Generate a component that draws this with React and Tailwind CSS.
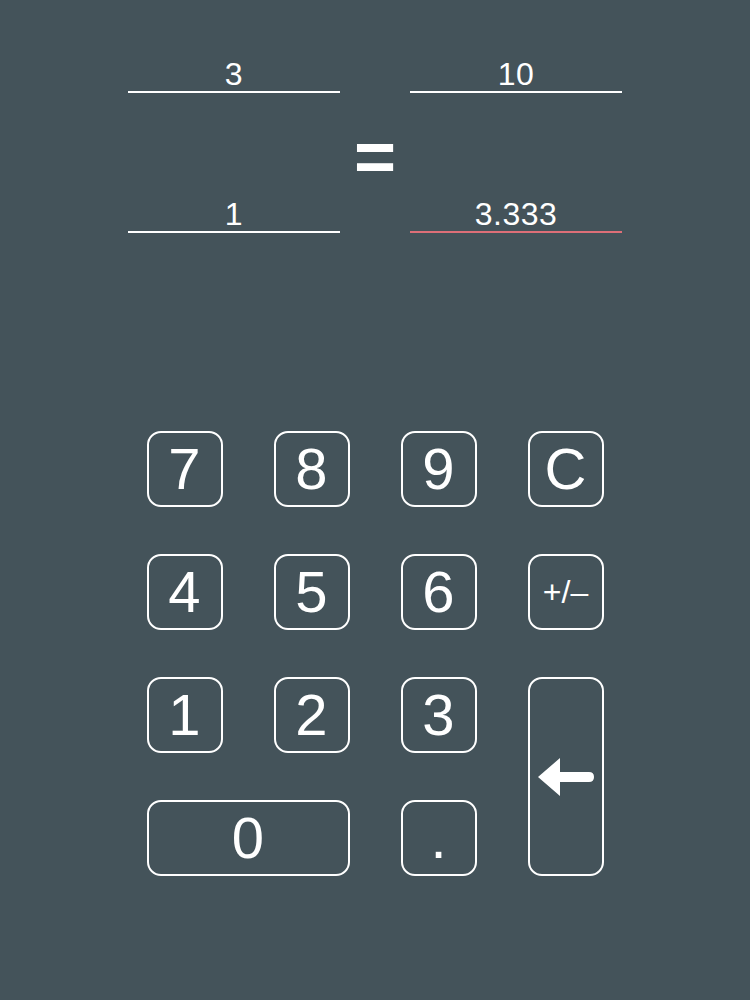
const font = { fontFamily: '"Liberation Sans", Arial, sans-serif' };

function Field({ value, accent }) {
  return (
    <div
      className={`w-[212px] h-[36px] text-center text-[32px] leading-[34px] tracking-[0.5px] text-white border-b-2 ${
        accent ? "border-[#de6f78]" : "border-white"
      }`}
    >
      {value}
    </div>
  );
}

function Key({ children, className = "", small }) {
  return (
    <button
      className={`flex items-center justify-center rounded-[14px] border-2 border-white text-white ${
        small ? "text-[32px]" : "text-[58px]"
      } leading-none ${className}`}
    >
      {children}
    </button>
  );
}

function BackArrow() {
  return (
    <svg width="56" height="38" viewBox="0 0 56 38" fill="white">
      <path d="M0 19 L22 0 L22 14 L51 14 Q56 14 56 19 Q56 24 51 24 L22 24 L22 38 Z" />
    </svg>
  );
}

export default function App() {
  return (
    <div className="w-full min-h-[1000px] bg-[#44535a] flex flex-col items-center pt-[57px]" style={font}>
      <div className="flex flex-row items-center">
        <div className="flex flex-col gap-[104px]">
          <Field value="3" />
          <Field value="1" />
        </div>
        <div className="w-[70px] flex justify-center text-white text-[72px] font-bold leading-none mt-[22px]">=</div>
        <div className="flex flex-col gap-[104px]">
          <Field value="10" />
          <Field value="3.333" accent />
        </div>
      </div>

      <div className="mt-[198px] grid grid-cols-[76px_76px_76px_76px] grid-rows-[76px_76px_76px_76px] gap-x-[51px] gap-y-[47px]">
        <Key>7</Key>
        <Key>8</Key>
        <Key>9</Key>
        <Key>C</Key>
        <Key>4</Key>
        <Key>5</Key>
        <Key>6</Key>
        <Key small>+/–</Key>
        <Key>1</Key>
        <Key>2</Key>
        <Key>3</Key>
        <Key className="row-span-2">
          <BackArrow />
        </Key>
        <Key className="col-span-2">0</Key>
        <Key>.</Key>
      </div>
    </div>
  );
}
